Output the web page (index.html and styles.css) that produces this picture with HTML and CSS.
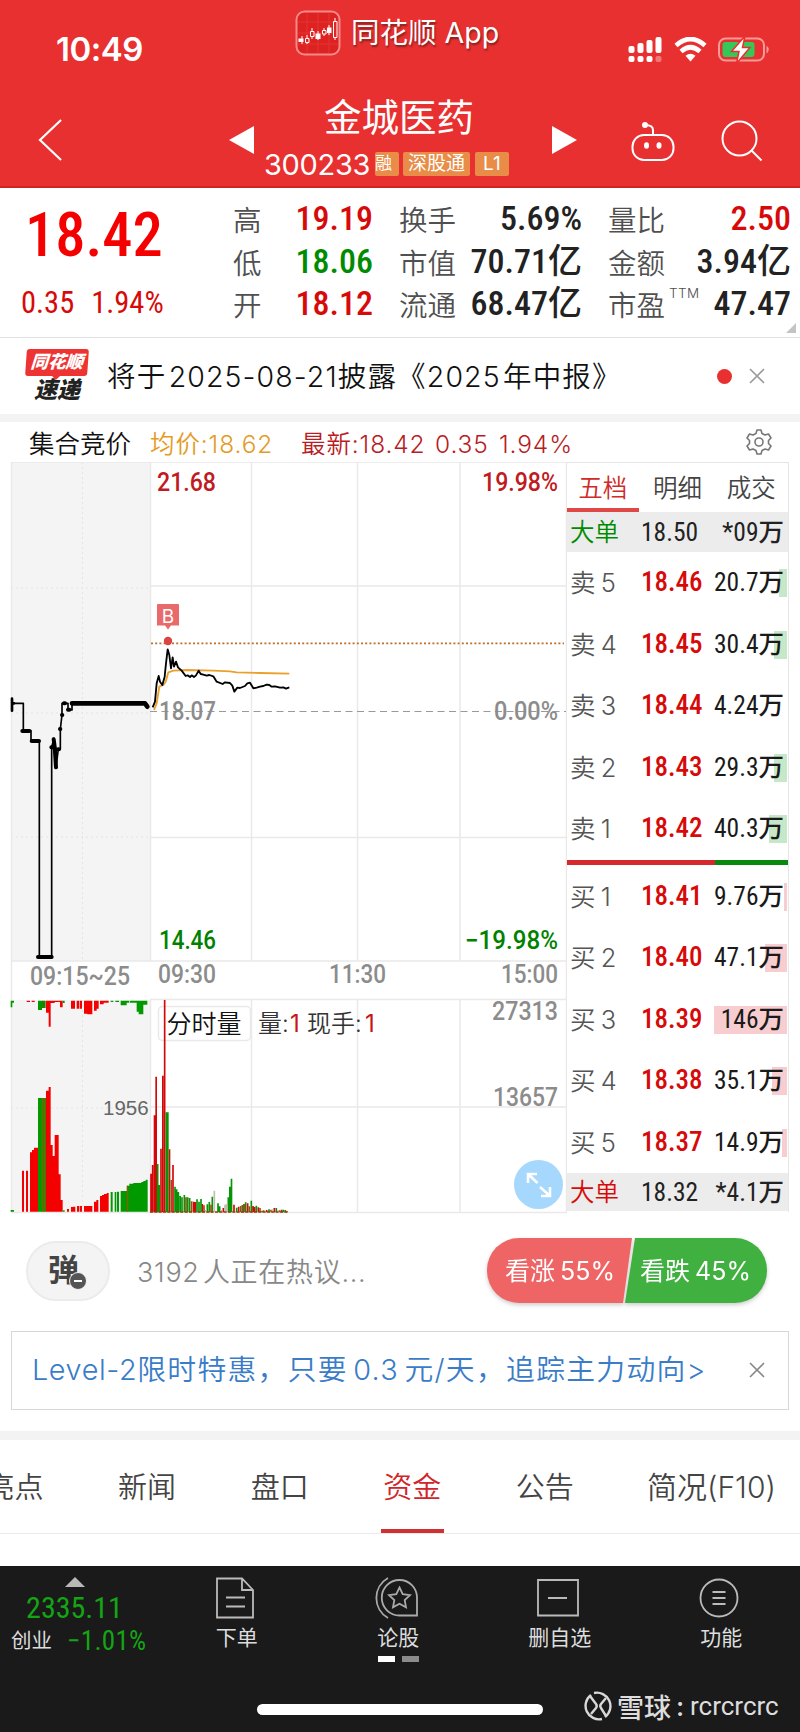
FILE: index.html
```html
<!DOCTYPE html>
<html lang="zh-CN">
<head>
<meta charset="UTF-8">
<meta name="viewport" content="width=device-width, initial-scale=1.0">
<title>金城医药 300233</title>
<link rel="stylesheet" href="styles.css">
</head>
<body>
<header class="header">
<div class="status-bar">
<span class="clock">10:49</span>
<svg class="status-icons" width="142" height="26" viewBox="0 0 142 26">
<g fill="#fff">
<rect x="0.5" y="9" width="6" height="7" rx="2"/><rect x="9.5" y="6" width="6" height="10" rx="2"/><rect x="18.5" y="3" width="6" height="13" rx="2"/><rect x="27.5" y="0" width="6" height="16" rx="2"/>
<rect x="0.5" y="19" width="6" height="6" rx="2"/><rect x="9.5" y="19" width="6" height="6" rx="2"/><rect x="18.5" y="19" width="6" height="6" rx="2"/><rect x="27.5" y="19" width="6" height="6" rx="2" opacity=".35"/>
<path d="M62.500 24.500L57.500 18.800Q62.500 14.800 67.500 18.800Z"/>
</g>
<path d="M48 8.500Q62.500 -4.500 77 8.500M53 14.500Q62.500 6 72 14.500" fill="none" stroke="#fff" stroke-width="4.600"/>
<rect x="91" y="1.500" width="45" height="22" rx="6.500" fill="none" stroke="#f69a9a" stroke-width="2"/>
<rect x="94.500" y="5" width="32" height="15" rx="3" fill="#35c759"/>
<path d="M138.500 8.500Q143 12.500 138.500 16.500Z" fill="#f69a9a"/>
<path d="M117 -1L103.500 14.500H111L108.500 26.500L122 10.500H114.500Z" fill="#fff" stroke="#e93030" stroke-width="1.500"/>
</svg>
</div>
<div class="app-mark">
<svg width="46" height="46" viewBox="0 0 46 46">
<rect x="1.500" y="1.500" width="43" height="43" rx="8" fill="#de2222" stroke="#f48a8a" stroke-width="2"/>
<path d="M12 3V43M23 3V43M34 3V43M3 12H43M3 23H43M3 34H43" stroke="#e23434" stroke-width="1"/>
<path d="M7 26V34M12 25V34M17 18V29M23 21V30M29 18V26M34 15V25M40 8V30" stroke="#fff" stroke-width="1"/>
<path d="M3.500 28.500H8.500V32H3.500ZM20.500 23.500H25.500V29H20.500ZM32 17.500H36.500V23H32Z" fill="#fff"/>
<path d="M10.500 28.500H14V32.500H10.500ZM15.500 21.500H19V26.500H15.500ZM27.500 20.500H31V24H27.500ZM38.500 11.500H42V27.500H38.500Z" fill="#e02525" stroke="#fff"/>
</svg>
<span>同花顺 App</span>
</div>
<div class="nav">
<svg class="back" width="26" height="44" viewBox="0 0 26 44"><path d="M24 2L3 22L24 42" fill="none" stroke="#fff" stroke-width="2.200"/></svg>
<svg class="prev" width="25" height="28"><path d="M0 14L25 0V28Z" fill="#fff"/></svg>
<div class="stock">
<h1>金城医药</h1>
<div class="stock-code"><span class="code">300233</span><span class="tag tag-rong">融</span><span class="tag">深股通</span><span class="tag tag-l1">L1</span></div>
</div>
<svg class="next" width="25" height="28"><path d="M25 14L0 0V28Z" fill="#fff"/></svg>
<svg class="robot" width="44" height="42" viewBox="0 0 44 42"><g fill="none" stroke="#fff" stroke-width="2"><rect x="1.500" y="14" width="41" height="25" rx="11.500"/><path d="M22 14V9Q22 4 14 4"/></g><circle cx="14" cy="4" r="3" fill="#fff"/><ellipse cx="15.500" cy="24.500" rx="2.500" ry="3.200" fill="#fff"/><ellipse cx="28" cy="24.500" rx="2.500" ry="3.200" fill="#fff"/></svg>
<svg class="search" width="42" height="42" viewBox="0 0 42 42"><g fill="none" stroke="#fff" stroke-width="2"><circle cx="18.500" cy="18.500" r="17"/><path d="M30 30L40.500 40.500"/></g></svg>
</div>
</header>

<section class="quote">
<div class="price">
<div class="price-now din">18.42</div>
<div class="price-diff din"><span>0.35</span><span>1.94%</span></div>
</div>
<dl class="stats stats-1">
<dt>高</dt><dd class="din up">19.19</dd>
<dt>低</dt><dd class="din down">18.06</dd>
<dt>开</dt><dd class="din up">18.12</dd>
</dl>
<dl class="stats stats-2">
<dt>换手</dt><dd class="din">5.69%</dd>
<dt>市值</dt><dd class="din">70.71亿</dd>
<dt>流通</dt><dd class="din">68.47亿</dd>
</dl>
<dl class="stats stats-3">
<dt>量比</dt><dd class="din up">2.50</dd>
<dt>金额</dt><dd class="din">3.94亿</dd>
<dt>市盈<sup>TTM</sup></dt><dd class="din">47.47</dd>
</dl>
<i class="corner"></i>
</section>

<section class="news">
<div class="news-logo"><b class="logo-top">同花顺</b><b class="logo-bottom">速递</b></div>
<p>将于 <span>2025-08-21</span>披露《<span>2025</span> 年中报》</p>
<i class="dot"></i>
<svg class="close" width="16" height="16"><path d="M1 1L15 15M15 1L1 15" stroke="#999" stroke-width="1.600"/></svg>
</section>

<section class="legend">
<span class="legend-title">集合竞价</span>
<span class="legend-avg">均价:18.62</span>
<span class="legend-last">最新:18.42</span><span class="legend-diff">0.35</span><span class="legend-pct">1.94%</span>
<svg class="gear" width="28" height="28" viewBox="0 0 28 28"><g fill="none" stroke="#777" stroke-width="1.600" stroke-linejoin="round"><path d="M12 2H16L17 5.500L20 7L23.500 6L26 10L23.500 12.500V15.500L26 18L23.500 22L20 21L17 22.500L16 26H12L11 22.500L8 21L4.500 22L2 18L4.500 15.500V12.500L2 10L4.500 6L8 7L11 5.500Z"/><circle cx="14" cy="14" r="4"/></g></svg>
</section>

<section class="market">
<svg class="chart" width="567" height="752" viewBox="0 462 567 752">
<!-- call auction background and grid -->
<path d="M11 462H150V961H11ZM11 1000H150V1212H11Z" fill="#f4f4f4"/>
<path d="M82.500 462V961M82.500 1000V1212M11 588H150M11 713H150M11 837H150M11 1108H150" stroke="#e4e4e4" stroke-dasharray="2 3" fill="none"/>
<path d="M11 462H567M150.500 462V961M251.500 462V961M357.500 462V961M460 462V961M566.500 462V1212M150 586H567M150 837.500H567M11 961H567M11.500 462V1212" stroke="#e9e9e9" stroke-width="1.500" fill="none"/>
<path d="M150 999.500H567M150.500 1000V1212M251.500 1000V1212M357.500 1000V1212M460 1000V1212M150 1107H567M11 1212.500H567" stroke="#e9e9e9" stroke-width="1.500" fill="none"/>
<path d="M150 711.500H566" stroke="#999" stroke-dasharray="7 4.500"/>
<path d="M151 643.300H564" stroke="#b8702c" stroke-width="1.800" stroke-dasharray="2 2.200"/>
<!-- auction price -->
<g transform="translate(0 680) scale(.33333)" fill="none" stroke="#000" stroke-linecap="round" stroke-linejoin="round">
<path d="M36 70H70V152H93V180L118 184V831H155V202L162 175L168 262L175 207H181V147L186 105V70H204V90H216V70" stroke-width="5"/>
<path d="M67 153H88M95 183H117M114 831H155M154 202H158M161 178L164 200L168 262M174 208H177M180 147H181M186 105H187M192 70H195M204 89H208" stroke-width="12"/>
<path d="M216 70H435L442 80" stroke-width="14"/>
<path d="M36 56V92M37 70H42" stroke-width="8"/>
</g>
<!-- minute and average price -->
<g transform="translate(0 420) scale(.33333)" fill="none" stroke-linejoin="round">
<path d="M462 870L470 850L478 800L490 795L497 785L505 757L520 752L560 750L640 752L690 754L710 757L780 759L868 761" stroke="#eca02c" stroke-width="5.500"/>
<path d="M458 862L465 845L470 790L476 768L480 785L487 795L494 770L498 730L503 688L508 705L513 745L518 712L522 740L528 725L534 742L545 752L557 768L563 766L570 771L575 766L582 771L588 766L596 752L602 762L610 764L620 767L628 765L640 769L650 785L668 792L675 787L690 789L697 797L703 815L712 803L720 804L735 798L742 790L750 788L760 805L770 803L780 800L790 798L800 794L808 795L815 800L825 799L840 803L850 802L858 806L868 802" stroke="#000" stroke-width="5.500"/>
</g>
<path d="M157.500 604H178Q179 604 179 605V625.500H171L168 629.500L165 625.500H157V605Z" fill="#e96a6a"/>
<text class="flag" x="168" y="622.500" text-anchor="middle">B</text>
<circle cx="168" cy="641" r="4.200" fill="#dc4444"/>
<!-- axis labels -->
<g class="axis">
<text x="157" y="491" textLength="59" lengthAdjust="spacingAndGlyphs" fill="#c01a22">21.68</text>
<text x="482" y="491" textLength="76" lengthAdjust="spacingAndGlyphs" fill="#c01a22">19.98%</text>
<text x="159" y="719.500" textLength="57" lengthAdjust="spacingAndGlyphs">18.07</text>
<text x="494" y="719.500" textLength="64" lengthAdjust="spacingAndGlyphs">0.00%</text>
<text x="159" y="949" textLength="57" lengthAdjust="spacingAndGlyphs" fill="#008200">14.46</text>
<text x="465" y="949" textLength="93" lengthAdjust="spacingAndGlyphs" fill="#008200">−19.98%</text>
<text x="30" y="984.500" textLength="100" lengthAdjust="spacingAndGlyphs">09:15~25</text>
<text x="158" y="983" textLength="58" lengthAdjust="spacingAndGlyphs">09:30</text>
<text x="329" y="983" textLength="57" lengthAdjust="spacingAndGlyphs">11:30</text>
<text x="501" y="983" textLength="57" lengthAdjust="spacingAndGlyphs">15:00</text>
<text x="492" y="1019.500" textLength="66" lengthAdjust="spacingAndGlyphs">27313</text>
<text x="493" y="1105.500" textLength="65" lengthAdjust="spacingAndGlyphs">13657</text>
</g>
<text class="axis-small" x="103" y="1115">1956</text>
<rect x="158.500" y="1006.500" width="92" height="34" rx="4" fill="#fff" stroke="#e9e9e9" stroke-width="1.500"/>
<text class="vol-name" x="166.500" y="1033">分时量</text>
<g class="vol-info"><text x="258" y="1032">量:</text><text x="290" y="1032" class="hot">1</text><text x="307" y="1032">现手:</text><text x="365" y="1032" class="hot">1</text></g>
<!-- volume bars -->
<g transform="translate(0 980) scale(.33333)" fill="#f50000">
<path d="M66 695V572H72V695ZM78 695V572H84V695ZM90 695V517H96V510H102V503H114V695ZM138 695V332H146V321H152V495H158V528H164V465H176V583H182V660H188V695ZM201 695V687H207V695ZM213 695V681H219V680H226V695ZM231 695V678H237V695ZM239 695V678H246V695ZM252 695V678H277V695ZM282 695V665H289V660H295V695ZM300 695V648H306V645H312V642H320V639H326V695Z"/>
<path d="M32 695V690H42V695ZM114 695V354H138V695ZM188 695V691H194V695ZM332 695V636H338V695ZM344 695V636H349V695ZM351 695V635H357V695ZM362 695V633H380V617H388V611H400V609H424V606H430V603H437V599H443V695Z" fill="#009a00"/>
<path d="M127 695V354M133 695V354M383 695V617" stroke="#b84a00" stroke-width="3"/>
<path d="M80 62H90V66H80ZM95 62H104V66H95ZM138 62V98H146V140H152V69H164V66H180V82H188V62ZM213 62V86H225V62ZM230 62V86H237V62ZM239 62V86H246V62ZM252 62V101H262V103H277V62ZM282 62V92H290V86H296V62ZM300 62V73H311V68H326V62Z"/>
<path d="M32 62V82H37V68H42V62ZM114 62V90H126V84H137V62ZM188 62V69H194V62ZM332 62V66H340V62ZM346 62V66H357V62ZM362 62V76H380V68H388V62ZM390 62V68H410V95H416V103H430V74H442V62Z" fill="#009a00"/>
<path d="M127 62V84M133 62V84" stroke="#e00"/>
<g fill="none" stroke-width="5">
<path d="M453 697V581M458 697V555M463.500 697V406M483 697V506M494 697V60M488.500 697V287M508.500 697V508M519 697V555M468.500 697V290M581 697V665M586 697V666M607 697V672M670 697V684M702 697V674M716 697V680M732 697V672M743 697V670M759 697V678M764 697V681M775 697V682M800 697V690M823 697V684M845 697V689M861 697V694" stroke="#d40808"/>
<path d="M473 697V552M477.500 697V615M499 697V397M503.500 697V397M525 697V620M530 697V628M535 697V636M540.500 697V648M546 697V652M553 697V645M563 697V652M569 697V654M591 697V658M597 697V665M603 697V657M622 697V673M628 697V666M637 697V650M654 697V670M659 697V679M685 697V652M689.500 697V620M694.500 697V596M710 697V683M727 697V675M737 697V667M754 697V662M769 697V677M786 697V692M807 697V688M829 697V684M850 697V689M856 697V690" stroke="#079407"/>
<path d="M514 697V600M558 697V652M575 697V664M612 697V676M633 697V674M722 697V678M748 697V679M780 697V684M791 697V691M813 697V689M839 697V691" stroke="#9a5014"/>
<path d="M643 697V632M617 697V689M664 697V690M680 697V671M675 697V674M818 697V688M834 697V691" stroke="#c5bdb0"/>
</g>
<path d="M450 696H865" stroke="#9a3a0a" stroke-width="4" stroke-dasharray="9 4"/>
</g>
<circle cx="538.500" cy="1184.500" r="24.500" fill="#a5d8fc"/>
<path d="M528 1183V1174H537M528.500 1174.500L537.500 1183M550 1187V1196H541M549.500 1195.500L540 1187" fill="none" stroke="#fff" stroke-width="2.600"/>
</svg>

<div class="book">
<div class="book-tabs"><span class="active">五档</span><span>明细</span><span>成交</span></div>
<div class="big-order"><span class="down">大单</span><span class="din">18.50</span><span class="din">*09万</span></div>
<div class="levels">
<div class="level"><span>卖 5</span><b class="din">18.46</b><em class="din">20.7万</em><i class="bar sell" style="width:8px"></i></div>
<div class="level"><span>卖 4</span><b class="din">18.45</b><em class="din">30.4万</em><i class="bar sell" style="width:13px"></i></div>
<div class="level"><span>卖 3</span><b class="din">18.44</b><em class="din">4.24万</em></div>
<div class="level"><span>卖 2</span><b class="din">18.43</b><em class="din">29.3万</em><i class="bar sell" style="width:13px"></i></div>
<div class="level"><span>卖 1</span><b class="din">18.42</b><em class="din">40.3万</em><i class="bar sell" style="width:18px"></i></div>
</div>
<div class="ratio"><i style="width:148px"></i></div>
<div class="levels">
<div class="level"><span>买 1</span><b class="din">18.41</b><em class="din">9.76万</em><i class="bar buy" style="width:3px"></i></div>
<div class="level"><span>买 2</span><b class="din">18.40</b><em class="din">47.1万</em><i class="bar buy" style="width:22px"></i></div>
<div class="level"><span>买 3</span><b class="din">18.39</b><em class="din">146万</em><i class="bar buy" style="width:73px"></i></div>
<div class="level"><span>买 4</span><b class="din">18.38</b><em class="din">35.1万</em><i class="bar buy" style="width:15px"></i></div>
<div class="level"><span>买 5</span><b class="din">18.37</b><em class="din">14.9万</em><i class="bar buy" style="width:5px"></i></div>
</div>
<div class="big-order bottom"><span class="up">大单</span><span class="din">18.32</span><span class="din">*4.1万</span></div>
</div>
</section>

<section class="talk">
<div class="barrage">弹<i></i></div>
<p>3192 人正在热议...</p>
<div class="vote"><span class="vote-up">看涨 55%</span><span class="vote-down">看跌 45%</span></div>
</section>

<section class="promo">
<p><span>Level-2</span>限时特惠，只要 0.3 元/天，追踪主力动向&gt;</p>
<svg class="close" width="16" height="16"><path d="M1 1L15 15M15 1L1 15" stroke="#888" stroke-width="1.600"/></svg>
</section>

<nav class="tabs">
<span>亮点</span><span>新闻</span><span>盘口</span><span class="active">资金</span><span>公告</span><span>简况(F10)</span>
</nav>

<footer class="footer">
<div class="index">
<i class="up-arrow"></i>
<div class="index-value din">2335.11</div>
<div class="index-row"><span>创业</span><span class="din">−1.01%</span></div>
</div>
<div class="tool">
<svg width="40" height="42" viewBox="0 0 40 42"><g fill="none" stroke="#bbb" stroke-width="1.800"><path d="M2 1.500H27L38 13V40.500H2ZM27 1.500V13H38M11 20.500H30M11 29.500H30"/></g></svg>
<span>下单</span>
</div>
<div class="tool">
<svg width="44" height="42" viewBox="0 0 44 42"><g fill="none" stroke="#aaa" stroke-width="1.800"><path d="M25.500 3A17.500 17.500 0 0 1 43 20.500V38.500H25.500A17.500 17.500 0 0 1 25.500 3Z"/><path d="M14 1A23 23 0 0 0 14 41"/><path d="M25.500 10.500L28.700 17.100L36 18.100L30.700 23.100L32 30.300L25.500 26.800L19 30.300L20.300 23.100L15 18.100L22.300 17.100Z"/></g></svg>
<span>论股</span>
<div class="pager"><i></i><i></i></div>
</div>
<div class="tool">
<svg width="42" height="42" viewBox="0 0 42 42"><path d="M1 3H41V38.500H1ZM11 21H30" fill="none" stroke="#bbb" stroke-width="1.800"/></svg>
<span>删自选</span>
</div>
<div class="tool">
<svg width="42" height="42" viewBox="0 0 42 42"><g fill="none" stroke="#bbb" stroke-width="1.800"><circle cx="21" cy="21" r="18.500"/><path d="M14.500 15H27.500M14.500 21H27.500M14.500 27H27.500"/></g></svg>
<span>功能</span>
</div>
<i class="home-bar"></i>
<div class="source">
<svg width="30" height="30" viewBox="0 0 30 30"><g fill="none" stroke="#d8d8d8" stroke-width="2.400"><path d="M11 2A13.500 13.500 0 0 1 22 26M19 28A13.500 13.500 0 0 1 8 4"/><path d="M7 5L13 13Q14.500 15 13 17L8 23M23 7L18 13Q16.500 15 18 17L23 25"/></g></svg>
<span>雪球</span><span class="colon">:</span><span class="user">rcrcrcrc</span>
</div>
</footer>
</body>
</html>
```

FILE: styles.css
```css
* {
margin: 0;
padding: 0;
box-sizing: border-box;
}
body {
width: 800px;
height: 1732px;
overflow: hidden;
background-color: #fff;
font-family: Inter, "Noto Sans CJK SC", sans-serif;
color: #222;
}
i, em {
font-style: normal;
}
svg {
display: block;
}
.din {
font-family: Roboto, "Noto Sans CJK SC", sans-serif;
font-stretch: 87%;
}
.up {
color: #d70a0a;
}
.down {
color: #008c00;
}
/* Header */
.header {
position: relative;
height: 188px;
background-color: #e93030;
border-bottom: 2px solid #d32424;
color: #fff;
}
.status-bar {
display: flex;
justify-content: space-between;
height: 100px;
padding: 37px 30px 0 56px;
}
.clock {
font-size: 33px;
line-height: 25px;
font-weight: 600;
letter-spacing: -.5px;
}
.app-mark {
position: absolute;
top: 10px;
left: 295px;
display: flex;
align-items: center;
gap: 10px;
font-size: 28.500px;
line-height: 46px;
text-shadow: 1px 2px 2px #802020;
}
.nav {
display: flex;
height: 86px;
padding-left: 37px;
}
.back {
margin-top: 18px;
}
.prev {
margin: 26px 0 0 166px;
}
.stock {
width: 278px;
margin-left: 10px;
}
.stock h1 {
font-size: 37.500px;
line-height: 36px;
font-weight: 400;
text-align: center;
margin-right: 8px;
}
.stock-code {
display: flex;
align-items: center;
height: 28px;
margin-top: 14px;
}
.code {
font-size: 29px;
font-weight: 400;
width: 111px;
letter-spacing: -.3px;
}
.tag {
height: 24px;
line-height: 23px;
padding: 0 5px;
margin-right: 5px;
border-radius: 2px;
background-color: #e88c48;
font-size: 19px;
}
.tag-rong {
width: 24px;
padding: 0;
font-size: 17px;
margin-right: 4px;
}
.tag-l1 {
padding: 0 8px;
}
.next {
margin: 26px 0 0 10px;
}
.robot {
margin: 21px 0 0 54px;
}
.search {
margin: 20px 0 0 46px;
}
/* Quote */
.quote {
position: relative;
display: flex;
height: 150px;
border-bottom: 1px solid #e0e0e0;
}
.price {
width: 233px;
}
.price-now {
margin: 18px 0 0 25px;
font-size: 60.500px;
line-height: 60px;
font-weight: 500;
color: #f50000;
}
.price-diff {
display: flex;
gap: 17px;
margin: 19px 0 0 21px;
font-size: 30.500px;
line-height: 36px;
font-weight: 450;
color: #d70a0a;
}
.stats {
display: grid;
grid-template-columns: auto 1fr;
grid-auto-rows: 42.500px;
margin-top: 9px;
line-height: 42px;
}
.stats-1 {
width: 140px;
}
.stats-2 {
width: 183px;
margin-left: 26px;
}
.stats-3 {
width: 183px;
margin-left: 26px;
}
.stats dt {
position: relative;
font-size: 28.500px;
font-weight: 350;
color: #505050;
white-space: nowrap;
padding-top: 3px;
}
.stats dd {
text-align: right;
font-size: 34px;
font-weight: 500;
white-space: nowrap;
}
.stats sup {
position: absolute;
left: 61px;
top: 1px;
font-size: 13.500px;
line-height: 20px;
letter-spacing: .4px;
}
.corner {
position: absolute;
right: 4px;
bottom: 4px;
border-left: 10px solid transparent;
border-bottom: 10px solid #c4c4c4;
}
/* News */
.news {
display: flex;
align-items: center;
height: 76px;
padding: 0 35px 0 26px;
}
.news p {
flex: 1;
margin: -4px 0 0 19px;
font-size: 28.500px;
font-weight: 350;
letter-spacing: 1.200px;
word-spacing: -7px;
color: #111;
white-space: nowrap;
}
.news p span {
font-size: 28.500px;
letter-spacing: 1.100px;
}
.news-logo {
width: 62px;
text-align: center;
font-style: italic;
font-weight: 900;
}
.logo-top {
position: relative;
display: block;
height: 27px;
line-height: 26px;
border-radius: 3px;
background-color: #e33;
color: #fff;
font-size: 17.500px;
transform: skewX(-4deg);
}
.logo-top::after {
content: "";
position: absolute;
left: 27px;
top: 27px;
border: 4px solid transparent;
border-top-color: #e33;
}
.logo-bottom {
display: block;
font-size: 23px;
line-height: 28px;
}
.dot {
width: 15px;
height: 15px;
border-radius: 50%;
background-color: #e93030;
margin-right: 17px;
}
/* Chart legend */
.legend {
display: flex;
align-items: center;
height: 48px;
padding-left: 29px;
border-top: 8px solid #f3f3f3;
font-size: 24.500px;
line-height: 38px;
font-weight: 350;
letter-spacing: .9px;
color: #b81c24;
}
.legend span {
padding-top: 4px;
white-space: nowrap;
}
.legend .legend-title {
width: 121px;
font-size: 25.500px;
letter-spacing: 0;
color: #111;
}
.legend-avg {
width: 151px;
color: #e59a24;
}
.legend-last {
width: 134px;
}
.legend-diff {
width: 64px;
}
.gear {
margin-left: auto;
margin-right: 27px;
}
/* Chart and order book */
.market {
display: flex;
}
.axis {
font-family: Roboto;
font-size: 25px;
font-weight: 500;
fill: #8c8c8c;
}
.axis-small {
font-family: "Liberation Sans";
font-size: 20.500px;
fill: #666;
}
.flag {
font-size: 19px;
fill: #fff;
}
.vol-name {
font-size: 25px;
font-weight: 350;
fill: #111;
}
.vol-info {
font-size: 24px;
font-weight: 350;
fill: #333;
}
.hot {
font-weight: 400;
fill: #c8141a;
}
.book {
width: 222px;
height: 750px;
border-top: 1px solid #e6e6e6;
border-right: 1px solid #e6e6e6;
}
.book-tabs {
display: flex;
height: 49px;
font-size: 24.500px;
line-height: 50px;
font-weight: 350;
color: #444;
}
.book-tabs span {
width: 74px;
text-align: center;
}
.book-tabs .active {
width: 72px;
margin-right: 2px;
color: #d02a2a;
border-bottom: 4px solid #e04848;
}
.big-order {
display: grid;
grid-template-columns: 71px 60px 1fr;
height: 40px;
padding: 0 4px 0 3px;
background-color: #ececec;
font-size: 24.500px;
font-weight: 350;
line-height: 41px;
white-space: nowrap;
}
.big-order .din {
font-size: 25.500px;
font-weight: 450;
font-stretch: 84%;
}
.big-order .din:last-child {
text-align: right;
}
.level {
position: relative;
display: grid;
grid-template-columns: 71px 64px 1fr;
height: 61.500px;
line-height: 61px;
padding: 0 4px 0 3px;
font-size: 25.500px;
font-weight: 350;
word-spacing: -2px;
color: #555;
}
.level b {
font-size: 27px;
font-weight: 500;
font-stretch: 85%;
color: #d70a0a;
}
.level em {
font-size: 25.500px;
font-weight: 450;
color: #1a1a1a;
text-align: right;
white-space: nowrap;
z-index: 1;
}
.bar {
position: absolute;
right: 1px;
top: 17px;
height: 28px;
}
.sell {
background-color: #c6e8c8;
}
.buy {
background-color: #f8cdd0;
}
.ratio {
height: 5px;
margin-bottom: 1px;
background-color: #098a0f;
}
.ratio i {
display: block;
height: 5px;
background-color: #d6292e;
}
.big-order.bottom {
height: 38px;
line-height: 39px;
}
/* Discussion */
.talk {
display: flex;
align-items: center;
height: 117px;
padding: 0 33px 4px 26px;
}
.barrage {
position: relative;
width: 84px;
height: 60px;
padding-left: 20px;
border: 2px solid #ebebeb;
border-radius: 30px;
background-color: #f4f4f4;
font-size: 31px;
line-height: 53px;
font-weight: 700;
color: #444;
}
.barrage i {
position: absolute;
left: 41px;
top: 29px;
width: 18px;
height: 18px;
border: 1px solid #f4f4f4;
border-radius: 50%;
background: linear-gradient(#fff, #fff) center / 8px 2px no-repeat #555;
}
.talk p {
margin-left: 27px;
font-size: 27px;
font-weight: 350;
letter-spacing: .7px;
word-spacing: -5px;
color: #888;
}
.vote {
display: flex;
margin-left: auto;
color: #fff;
font-size: 25px;
line-height: 66px;
word-spacing: -2px;
filter: drop-shadow(0 2px 2px rgba(0, 0, 0, .2));
}
.vote-up {
width: 145px;
height: 65px;
padding-left: 18px;
border-radius: 32px 0 0 32px;
background-color: #ef6464;
clip-path: polygon(0 0, 100% 0, 136px 100%, 0 100%);
}
.vote-down {
width: 142px;
height: 65px;
margin-left: -7px;
padding-left: 15px;
border-radius: 0 32px 32px 0;
background-color: #40b040;
clip-path: polygon(10px 0, 100% 0, 100% 100%, 0 100%);
}
/* Promo */
.promo {
display: flex;
align-items: center;
justify-content: space-between;
height: 79px;
margin: 0 11px;
padding: 0 23px 1px 20px;
border: 1px solid #d8d8d8;
font-size: 28.800px;
font-weight: 350;
letter-spacing: 1.300px;
word-spacing: -4px;
color: #3a7cc8;
white-space: nowrap;
}
.promo p {
margin-top: -5px;
}
.promo span {
letter-spacing: .6px;
}
/* Tabs */
.tabs {
display: flex;
height: 103px;
margin-top: 21px;
border-top: 9px solid #f3f3f3;
border-bottom: 1px solid #ececec;
font-size: 29px;
line-height: 95px;
font-weight: 350;
color: #444;
}
.tabs span {
width: 63px;
margin-right: 69.600px;
text-align: center;
white-space: nowrap;
}
.tabs span:first-child {
margin-left: -17px;
}
.tabs span:last-child {
width: 131px;
margin-right: 0;
font-size: 30px;
}
.tabs .active {
color: #d0262a;
border-bottom: 4px solid #cf3034;
}
/* Footer */
.footer {
position: relative;
display: flex;
height: 166px;
margin-top: 32px;
background-color: #1a1a1a;
color: #ddd;
}
.index {
width: 154px;
padding-right: 5px;
text-align: center;
}
.up-arrow {
display: block;
width: 0;
margin: 11px auto 0;
border: 10px solid transparent;
border-top: 0;
border-bottom-color: #b8b8b8;
}
.index-value {
font-size: 30px;
line-height: 36px;
margin-top: 3px;
color: #14a514;
}
.index-row {
display: flex;
align-items: center;
padding-left: 11px;
font-size: 20.500px;
line-height: 30px;
gap: 15px;
white-space: nowrap;
}
.index-row .din {
font-size: 27px;
letter-spacing: .3px;
color: #14a514;
}
.tool {
width: 161.500px;
padding-top: 11px;
display: flex;
flex-direction: column;
align-items: center;
font-size: 21px;
}
.tool span {
line-height: 26px;
margin-top: 6px;
padding-left: 4px;
}
.pager {
display: flex;
gap: 7px;
margin-top: 5px;
padding-left: 4px;
}
.pager i {
width: 17px;
height: 6px;
background-color: #fff;
}
.pager i:last-child {
background-color: #8c8c8c;
}
.home-bar {
position: absolute;
left: 257px;
bottom: 17px;
width: 286px;
height: 11px;
border-radius: 6px;
background-color: #fff;
}
.source {
position: absolute;
left: 583px;
bottom: 6px;
display: flex;
align-items: center;
height: 40px;
font-size: 27px;
font-weight: 500;
color: #ddd;
}
.source svg {
margin-right: 4px;
}
.source .colon {
width: 14px;
margin-left: 5px;
}
.source .user {
font-family: Roboto;
font-size: 26px;
font-weight: 400;
font-stretch: 94%;
}
```
